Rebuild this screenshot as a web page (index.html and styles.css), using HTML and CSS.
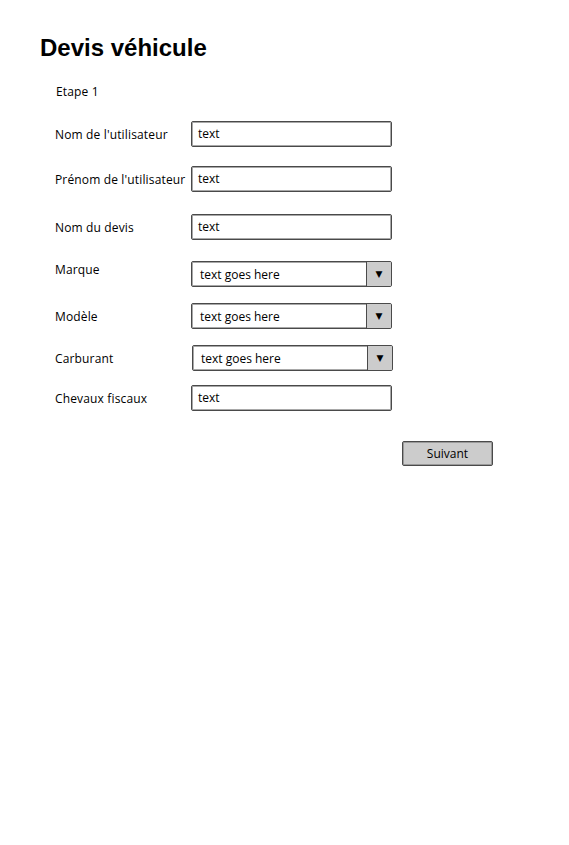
FILE: index.html
```html
<!DOCTYPE html>
<html lang="fr">
<head>
<meta charset="utf-8">
<title>Devis véhicule</title>
<link rel="stylesheet" href="styles.css">
</head>
<body>
<div class="page">
  <h1 class="title">Devis véhicule</h1>
  <div class="step">Etape 1</div>
  <div class="form">
    <div class="row">
      <span class="label">Nom de l'utilisateur</span>
      <div class="field">text</div>
    </div>
    <div class="row r2">
      <span class="label">Prénom de l'utilisateur</span>
      <div class="field">text</div>
    </div>
    <div class="row r3">
      <span class="label">Nom du devis</span>
      <div class="field">text</div>
    </div>
    <div class="row r4">
      <span class="label high">Marque</span>
      <div class="field select"><span class="value">text goes here</span><span class="arrow">▼</span></div>
    </div>
    <div class="row r5">
      <span class="label">Modèle</span>
      <div class="field select"><span class="value">text goes here</span><span class="arrow">▼</span></div>
    </div>
    <div class="row r6">
      <span class="label">Carburant</span>
      <div class="field select shift"><span class="value">text goes here</span><span class="arrow">▼</span></div>
    </div>
    <div class="row r7">
      <span class="label">Chevaux fiscaux</span>
      <div class="field">text</div>
    </div>
  </div>
  <div class="actions">
    <button class="btn" type="button">Suivant</button>
  </div>
</div>
</body>
</html>
```

FILE: styles.css
```css
html, body {
  margin: 0;
  padding: 0;
  background: #fff;
}
body {
  font-family: "Open Sans", "DejaVu Sans", sans-serif;
  font-size: 12px;
  color: #000;
}
.page {
  padding: 34px 0 0 40px;
}
.title {
  margin: 0;
  font-family: "Liberation Sans", Arial, sans-serif;
  font-weight: bold;
  font-size: 24px;
  line-height: 28px;
}
.step {
  margin: 22px 0 0 16px;
  line-height: 16px;
  letter-spacing: 0.15px;
}
.form {
  margin: 21px 0 0 15px;
  display: flex;
  flex-direction: column;
}
.row {
  display: flex;
  align-items: center;
  height: 26px;
}
.r2 { margin-top: 19px; }
.r3 { margin-top: 22px; }
.r4 { margin-top: 21px; }
.r5 { margin-top: 16px; }
.r6 { margin-top: 16px; }
.r7 { margin-top: 14px; }
.label {
  width: 136px;
  flex: none;
  line-height: 16px;
  padding-top: 2px;
  letter-spacing: 0.15px;
  white-space: nowrap;
}
.label.high {
  margin-bottom: 10px;
}
.field {
  box-sizing: border-box;
  width: 201px;
  height: 26px;
  border: 1px solid #4a4a4a;
  border-radius: 2px;
  box-shadow: inset 0 0 0 1px #a8a8a8;
  padding: 0 6px;
  line-height: 23px;
  background: #fff;
}
.select {
  display: flex;
  padding: 0;
  overflow: hidden;
}
.select.shift {
  margin-left: 1px;
}
.value {
  flex: 1;
  padding-left: 8px;
  line-height: 25px;
}
.arrow {
  width: 24px;
  flex: none;
  background: #cccccc;
  border-left: 1px solid #4a4a4a;
  text-align: center;
  font-size: 9px;
  line-height: 24px;
}
.actions {
  margin: 30px 0 0 362px;
}
.btn {
  box-sizing: border-box;
  width: 91px;
  height: 25px;
  background: #cccccc;
  border: 1px solid #4a4a4a;
  border-radius: 2px;
  box-shadow: inset 0 0 0 1px #9a9a9a;
  font-family: "Open Sans", "DejaVu Sans", sans-serif;
  font-size: 12px;
  color: #000;
  padding: 0;
}
```
